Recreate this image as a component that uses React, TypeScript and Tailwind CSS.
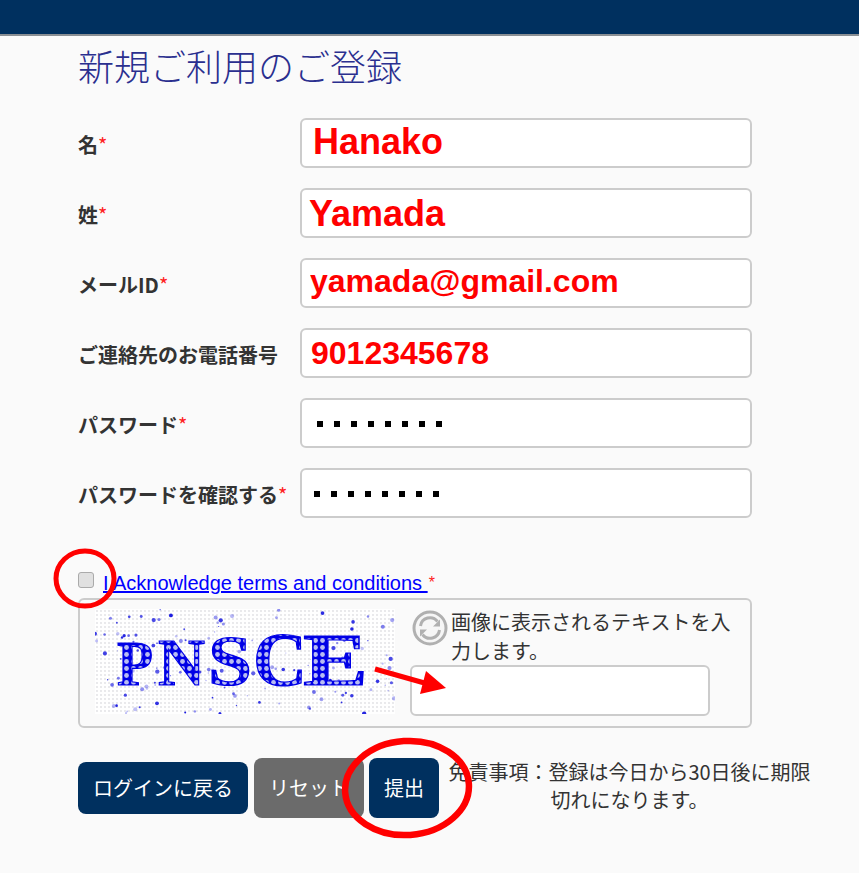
const jp = "font-['Noto_Sans_CJK_JP','Noto_Sans',sans-serif]";
const redInput = "font-['Liberation_Sans',sans-serif] font-bold text-[#ff0000]";

const rows = [
  { label: "名", star: true, value: "Hanako", cls: `${redInput} text-[36px] pl-[11px] pb-[2px]` },
  { label: "姓", star: true, value: "Yamada", cls: `${redInput} text-[36px] pl-[7px] pt-[2px]` },
  { label: "メールID", star: true, value: "yamada@gmail.com", cls: `${redInput} text-[32px] pl-[8px] pb-[3px]` },
  { label: "ご連絡先のお電話番号", star: false, value: "9012345678", cls: `${redInput} text-[32px] pl-[9px]` },
];

const pwRows = [
  { label: "パスワード", pad: "pl-[15px]" },
  { label: "パスワードを確認する", pad: "pl-[12px]" },
];

// captcha letters grow towards the right, x and width are in image pixels
const captchaLetters = [
  { ch: "P", x: 22, w: 36, size: 64 },
  { ch: "N", x: 63, w: 47, size: 68 },
  { ch: "S", x: 113, w: 44, size: 71 },
  { ch: "C", x: 158, w: 54, size: 76 },
  { ch: "E", x: 208, w: 65, size: 75 },
];

function Label({ text, star }: { text: string; star: boolean }) {
  return (
    <label className={`w-[222px] shrink-0 pt-[4px] text-[20px] font-bold leading-[28px] text-[#333] ${jp}`}>
      {text}
      {star && <span className="font-normal text-[#ff2020]">*</span>}
    </label>
  );
}

// seeded so the speckle stays the same from run to run
function speckles() {
  let seed = 17;
  const rnd = () => {
    seed = (seed * 16807) % 2147483647;
    return seed / 2147483647;
  };
  const out: { x: number; y: number; r: number; o: number }[] = [];
  for (let i = 0; i < 150; i++) {
    out.push({ x: rnd() * 300, y: rnd() * 105, r: 0.5 + rnd() * 1.7, o: 0.25 + rnd() * 0.75 });
  }
  return out;
}

function Captcha() {
  return (
    <svg width="300" height="105" viewBox="0 0 300 105" className="shrink-0">
      <defs>
        <pattern id="bgDots" width="4" height="4" patternUnits="userSpaceOnUse">
          <rect width="4" height="4" fill="#ffffff" />
          <circle cx="2" cy="2" r="0.9" fill="#e0e0e4" />
        </pattern>
        <pattern id="letterDots" width="7" height="7" patternUnits="userSpaceOnUse">
          <rect width="7" height="7" fill="#0000e6" />
          <circle cx="3.5" cy="3.5" r="2.4" fill="#b8bcf2" />
        </pattern>
      </defs>
      <rect width="300" height="105" fill="url(#bgDots)" />
      {speckles().map((s, i) => (
        <circle key={i} cx={s.x} cy={s.y} r={s.r} fill="#1a1ae0" opacity={s.o} />
      ))}
      {captchaLetters.map((l) => (
        <text
          key={l.ch}
          x={l.x}
          y="76"
          textLength={l.w}
          lengthAdjust="spacingAndGlyphs"
          fontFamily="Liberation Serif, serif"
          fontWeight="bold"
          fontSize={l.size}
          fill="url(#letterDots)"
          stroke="#0000e6"
          strokeWidth="1.2"
        >
          {l.ch}
        </text>
      ))}
    </svg>
  );
}

function RefreshIcon() {
  return (
    <svg width="38" height="38" viewBox="0 0 38 38" fill="none" className="absolute left-[1px] top-0">
      <circle cx="19" cy="19" r="16" stroke="#b0b0b0" strokeWidth="3" fill="#f6f6f6" />
      <path d="M9.5 17a9.5 9.5 0 0 1 17-4.5" stroke="#b0b0b0" strokeWidth="3" />
      <path d="M29 10.5v7h-7z" fill="#b0b0b0" />
      <path d="M28.5 21a9.5 9.5 0 0 1-17 4.5" stroke="#b0b0b0" strokeWidth="3" />
      <path d="M9 27.5v-7h7z" fill="#b0b0b0" />
    </svg>
  );
}

function Annotations() {
  return (
    <svg width="859" height="873" viewBox="0 0 859 873" fill="none" className="pointer-events-none absolute left-0 top-0">
      <ellipse cx="85" cy="578.5" rx="29" ry="27.5" stroke="#ff0000" strokeWidth="5" />
      <ellipse cx="407" cy="788" rx="62" ry="47" stroke="#ff0000" strokeWidth="6.5" transform="rotate(-4 407 788)" />
      <path d="M375 669L428 684" stroke="#ff0000" strokeWidth="5" />
      <path d="M446 688L426 671L420 694z" fill="#ff0000" />
    </svg>
  );
}

export default function App() {
  return (
    <div className={`relative h-[873px] w-[859px] overflow-hidden bg-[#fafafa] ${jp}`}>
      <div className="h-[36px] border-b-2 border-[#8a8f94] bg-[#00305f]" />

      <div className="pl-[78px]">
        <h1 className={`mt-[6px] text-[36px] font-light leading-[46px] whitespace-nowrap text-[#2a2f8f] ${jp}`}>
          新規ご利用のご登録
        </h1>

        <div className="mt-[30px] flex flex-col gap-[20px]">
          {rows.map((r) => (
            <div key={r.label} className="flex items-center">
              <Label text={r.label} star={r.star} />
              <input
                readOnly
                value={r.value}
                className={`h-[50px] w-[452px] rounded-[6px] border-2 border-[#cccccc] bg-white ${r.cls}`}
              />
            </div>
          ))}
          {pwRows.map((r) => (
            <div key={r.label} className="flex items-center">
              <Label text={r.label} star />
              <div
                className={`flex h-[50px] w-[452px] items-center gap-[11px] rounded-[6px] border-2 border-[#cccccc] bg-white pt-[2px] ${r.pad}`}
              >
                {Array.from({ length: 8 }).map((_, i) => (
                  <span key={i} className="h-[6px] w-[6px] bg-black" />
                ))}
              </div>
            </div>
          ))}
        </div>

        <div className="mt-[50px] flex h-[30px] items-center">
          <input
            type="checkbox"
            readOnly
            className="mb-[6px] h-[16px] w-[16px] appearance-none rounded-[3px] border border-[#aaaaaa] bg-[#e0e0e0]"
          />
          <a
            href="#"
            className="ml-[9px] whitespace-pre font-['Liberation_Sans',sans-serif] text-[20px] leading-[26px] text-[#0000ff] underline"
          >
            {"I Acknowledge terms and conditions "}
          </a>
          <span className="ml-[1px] font-['Liberation_Sans',sans-serif] text-[16px] text-[#ff2020]">*</span>
        </div>

        <div className="flex h-[130px] w-[674px] rounded-[6px] border-2 border-[#cccccc] pl-[15px] pt-[9px]">
          <Captcha />
          <div className="relative ml-[15px] w-[330px]">
            <RefreshIcon />
            <p className="-mt-[2px] pl-[41px] text-[20px] leading-[29px] text-[#333]">
              画像に表示されるテキストを入力します。
            </p>
            <input
              readOnly
              className="h-[51px] w-[300px] rounded-[6px] border-2 border-[#cccccc] bg-white"
            />
          </div>
        </div>

        <div className="mt-[30px] flex items-center">
          <button className="h-[52px] w-[170px] shrink-0 rounded-[8px] bg-[#00305f] text-[20px] text-white">ログインに戻る</button>
          <button className="ml-[6px] h-[60px] w-[110px] shrink-0 rounded-[8px] bg-[#6b6b6b] text-[20px] text-white">リセット</button>
          <button className="ml-[5px] h-[60px] w-[70px] shrink-0 rounded-[8px] bg-[#00305f] text-[20px] text-white">提出</button>
          <p className="mb-[4px] ml-[5px] w-[371px] shrink-0 text-center text-[20px] leading-[28px] text-[#333]">
            免責事項：登録は今日から30日後に期限切れになります。
          </p>
        </div>
      </div>

      <Annotations />
    </div>
  );
}
